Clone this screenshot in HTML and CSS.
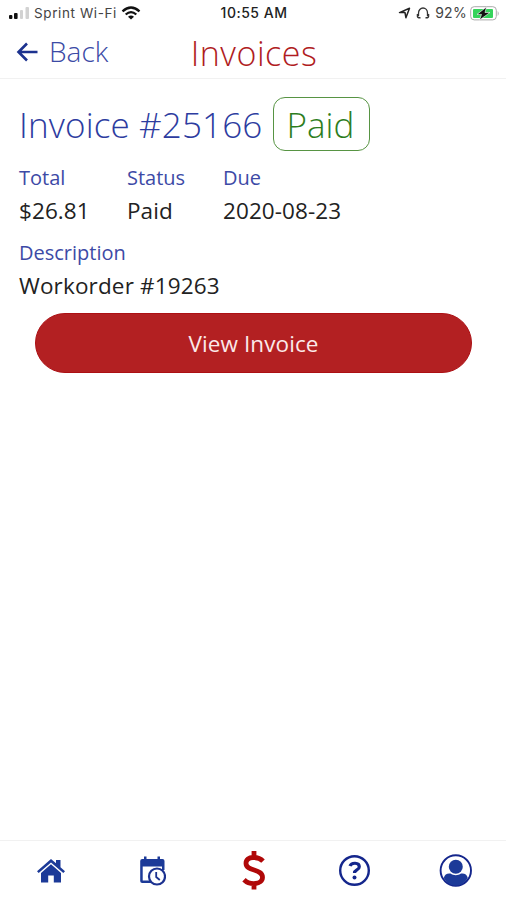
FILE: index.html
```html
<!DOCTYPE html>
<html lang="en">
<head>
<meta charset="utf-8">
<title>Invoices</title>
<link rel="stylesheet" href="styles.css">
</head>
<body>
<div class="status-bar">
  <div class="status-left">
    <svg class="signal" width="22" height="14" viewBox="0 0 22 14"><rect x="1" y="9" width="3.4" height="4" rx="1" fill="#111"/><rect x="6" y="7" width="3.6" height="6" rx="1" fill="#111"/><rect x="12" y="4" width="3" height="9" rx="1" fill="#d2d2d2"/><rect x="17.500" y="1" width="3.500" height="12" rx="1" fill="#d2d2d2"/></svg>
    <span class="carrier">Sprint Wi-Fi</span>
    <svg class="wifi" width="20" height="14" viewBox="0 0 20 14" fill="none" stroke="#111" stroke-width="2.300"><path d="M1.500 5.300Q10-2.400 18.500 5.300M4.700 8.500Q10 3.800 15.300 8.500"/><path d="M7 10.700Q10 8.300 13 10.700L10 13.600Z" fill="#111" stroke="none"/></svg>
  </div>
  <div class="time">10:55 AM</div>
  <div class="status-right">
    <svg width="13" height="12" viewBox="0 0 13 12" fill="none" stroke="#222" stroke-width="1.500" stroke-linejoin="round"><path d="M1.500 5.600 11.500 1.200 7.900 10.700 7 5.600Z"/></svg>
    <svg width="14" height="12" viewBox="0 0 14 12" fill="none" stroke="#333" stroke-width="1.300"><path d="M2.500 9V6a4.500 5 0 0 1 9 0v3"/><path d="M1.500 7v2.500q0 1.500 3 1.200M12.500 7v2.500q0 1.500-3 1.200" stroke-width="1.500"/></svg>
    <span class="percent">92%</span>
    <svg width="30" height="15" viewBox="0 0 30 15"><rect x=".7" y=".7" width="25.600" height="13.200" rx="3.500" fill="#fff" stroke="#aaa"/><rect x="3" y="3" width="20" height="9" rx="1" fill="#35d35b"/><path d="M27.700 5q2 2.400 0 5z" fill="#aaa"/><path d="M16.500 1 7 8.400h4.500L9.500 14 20 6.500h-5z" fill="#111" stroke="#fff" stroke-width=".6"/></svg>
  </div>
</div>
<header class="header">
  <a class="back"><svg width="22" height="20" viewBox="0 0 22 20" fill="none" stroke="#1c328f" stroke-width="2.600"><path d="M21.500 10H3M11 1.500 2.500 10l8.500 8.500"/></svg><span class="back-label">Back</span></a>
  <h1 class="title">Invoices</h1>
</header>
<main class="content">
  <div class="heading"><h2 class="invoice-name">Invoice #25166</h2><span class="badge"><span class="badge-label">Paid</span></span></div>
  <dl class="details">
    <div class="field total"><dt>Total</dt><dd>$26.81</dd></div>
    <div class="field status"><dt>Status</dt><dd>Paid</dd></div>
    <div class="field due"><dt>Due</dt><dd>2020-08-23</dd></div>
  </dl>
  <dl class="details">
    <div class="field"><dt class="desc">Description</dt><dd class="work">Workorder #19263</dd></div>
  </dl>
  <button class="view"><span class="view-label">View Invoice</span></button>
</main>
<nav class="tabs">
  <a class="tab"><svg width="30" height="26" viewBox="0 0 30 26" fill="#1c3a98"><path d="M1 13.200 15 1l5 4.300V2h4.500v7.200L29 13.200l-1.700 1.900L15 4.500 2.700 15.100Z"/><path d="M15 6.200 25 15v9.500h-7.200v-7h-5.600v7H5V15Z"/></svg></a>
  <a class="tab"><svg width="28" height="30" viewBox="0 0 28 30"><path d="M2.200 5a2 2 0 0 1 2-2H6V.5h2.500V3h11V.5H22V3h2.500a2 2 0 0 1 2 2v9H24v-3.500H4.700V24.500H14V27H4.200a2 2 0 0 1-2-2Z" fill="#1c3a98"/><circle cx="19" cy="20.500" r="8" fill="#fff" stroke="#1c3290" stroke-width="2.200"/><path d="M18.200 16v5l3.600 3" fill="none" stroke="#1c3290" stroke-width="1.800"/></svg></a>
  <a class="tab"><svg width="26" height="44" viewBox="0 0 26 44" fill="none" stroke="#b00808" stroke-width="4.800"><path d="M14 2V8M14 34v6.500M23 12.200C18.500 7.400 6 6.500 6 14.200c0 8.500 16.500 5.200 16.500 14 0 8-13 8-18.500 2.500"/></svg></a>
  <a class="tab"><svg width="32" height="32" viewBox="0 0 32 32" fill="none" stroke="#14268c"><circle cx="16.500" cy="15.500" r="14.300" stroke-width="2.400"/><path d="M12 11C13.300 7.300 21.300 7.200 21.300 11.700c0 3.500-4.800 3-4.800 6.300" stroke-width="3.200"/><circle cx="16.500" cy="22.500" r="2" fill="#14268c" stroke="none"/></svg></a>
  <a class="tab"><svg width="34" height="34" viewBox="0 0 34 34"><circle cx="17.800" cy="16.500" r="15.200" fill="#fff" stroke="#14268c" stroke-width="1.900"/><circle cx="17.800" cy="12.800" r="7" fill="#1c3a98"/><path d="M5.800 24c.8-3.800 3.500-5 6.700-4.500 3 2.200 7.500 2.200 10.500 0 3.200-.5 6 .7 6.800 4.500C26.800 29 22.800 31.500 17.800 31.500S8.800 29 5.800 24Z" fill="#1c3a98"/></svg></a>
</nav>
</body>
</html>
```
FILE: styles.css
```css
* { box-sizing: border-box; }
body { margin: 0; height: 900px; display: flex; flex-direction: column; background: #fff; font-family: "Open Sans", sans-serif; color: #222; overflow: hidden; }
svg { display: block; flex: none; }
h1, h2, dl, dd { margin: 0; font-weight: 300; }
.status-bar { height: 26px; display: grid; grid-template-columns: 1fr auto 1fr; align-items: center; padding: 0 6px 0 8px; font: 13px/26px Inter, sans-serif; }
.status-left, .status-right { display: flex; align-items: center; }
.status-left { gap: 5px; color: #444; }
.signal { margin-right: -1px; }
.carrier { font-size: 13.500px; letter-spacing: .6px; margin-right: -1px; }
.time { font-weight: 500; font-size: 14px; letter-spacing: .5px; color: #222; }
.status-right { justify-content: flex-end; gap: 5px; color: #444; }
.percent { font-size: 14px; letter-spacing: .3px; margin-right: -2px; }
.header { height: 53px; display: grid; grid-template-columns: 1fr auto 1fr; align-items: center; padding: 0 16px; border-bottom: 1px solid #f1f1f1; }
.back { display: flex; align-items: center; gap: 11px; color: #3b4aa5; }
.back-label { font-size: 28px; font-weight: 300; line-height: 48px; padding-bottom: 2px; }
.title { font-size: 34px; line-height: 50px; padding: 1px 0 0 2px; letter-spacing: .5px; color: #b01c22; }
.content { flex: 1; padding: 18px 19px 0; }
.heading { display: flex; align-items: center; gap: 10.500px; height: 54px; }
.invoice-name { font-size: 35px; line-height: 54px; letter-spacing: .14px; padding-top: 1px; color: #2d3c9f; }
.badge { display: flex; align-items: center; justify-content: center; width: 97px; height: 54px; border: 1.500px solid #579443; border-radius: 12px; color: #2d7d1d; font-size: 35px; font-weight: 300; line-height: 52px; padding: 1px 2px 0 0; }
.details { display: flex; height: 75px; padding-top: 9px; }
.total { width: 108px; }
.status { width: 96px; }
dt { font-size: 20px; line-height: 34px; padding-top: 1px; margin-bottom: -1px; font-weight: 400; color: #3d4aa6; }
dd { font-size: 22.500px; line-height: 32px; padding-top: 1px; letter-spacing: .08px; font-weight: 400; }
.work { letter-spacing: .15px; }
.view { display: flex; align-items: center; justify-content: center; width: 437px; height: 60px; margin: 12px 0 0 16px; padding-top: 3px; border: 1px solid #ac1014; border-radius: 30px; background: #b32022; color: #fbe9e9; font: 22.500px/30px "Open Sans", sans-serif; letter-spacing: .1px; }
.tabs { height: 60px; display: grid; grid-template-columns: repeat(5, 1fr); align-items: center; border-top: 1px solid #f1f1f1; }
.tab { display: flex; justify-content: center; }
```
